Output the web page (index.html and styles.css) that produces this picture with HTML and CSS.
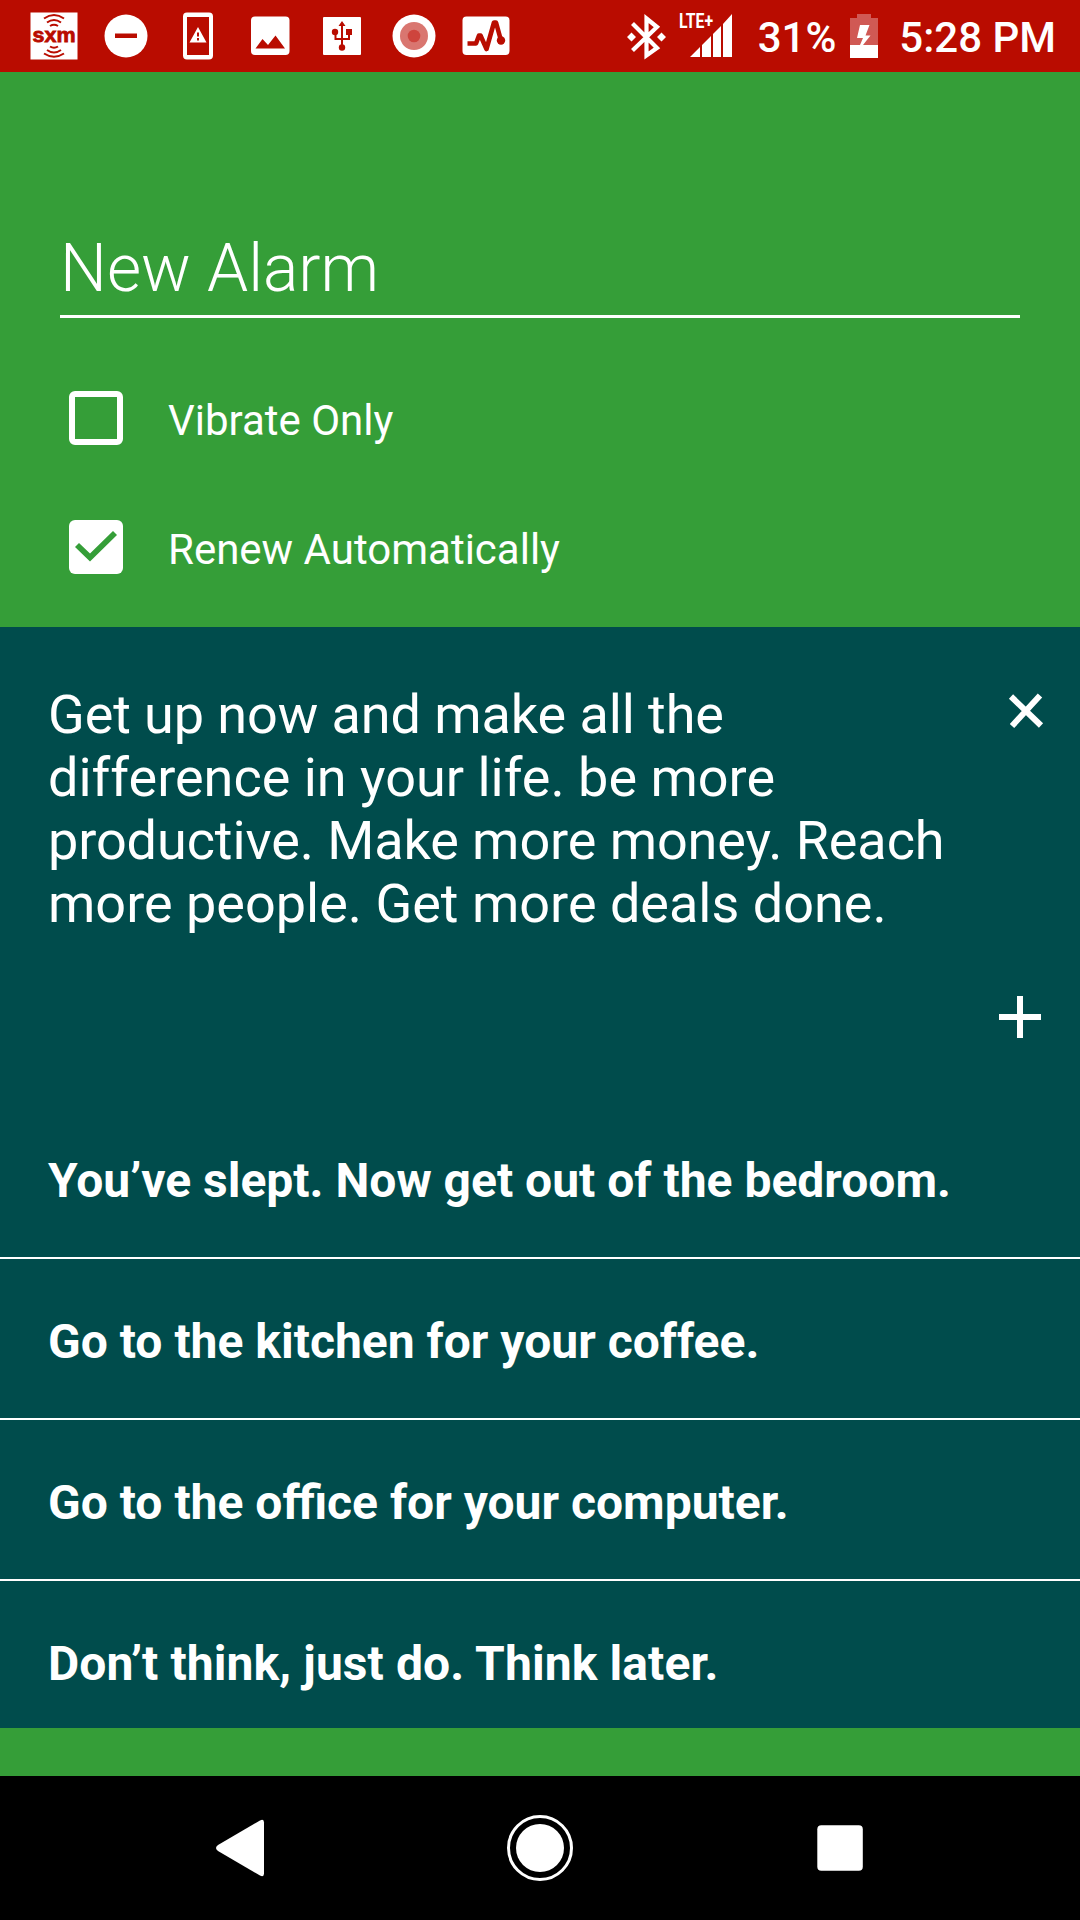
FILE: index.html
```html
<!DOCTYPE html>
<html lang="en">
<head>
<meta charset="utf-8">
<title>New Alarm</title>
<link rel="stylesheet" href="styles.css">
</head>
<body>
<div class="screen">
  <header class="status">
    <div class="notifications">
      <svg width="48" height="48" viewBox="0 0 48 48"><path class="w" d="M.5.5h47v47H.5z"/><g class="rs"><path d="M14 6.500q10-7 20 0M17 10.500q7-5 14 0M20 14q4-2.500 8 0M14 41.500q10 6.500 20 0M17 38q7 5 14 0M20 34.500q4 2.500 8 0"/></g><text class="sxm" x="2.500" y="29.500" textLength="43" lengthAdjust="spacingAndGlyphs">sxm</text></svg>
      <svg width="48" height="48" viewBox="0 0 48 48"><circle class="w" cx="24" cy="24" r="21.500"/><path class="r" d="M13 21.500h22v4.500H13z"/></svg>
      <svg width="48" height="48" viewBox="0 0 48 48"><path class="w" fill-rule="evenodd" d="M13 .5h22q4 0 4 4v39q0 4-4 4H13q-4 0-4-4v-39q0-4 4-4zM13 5v38h22V5zM24 15l8.500 15.500h-17zM23 20.500v4h2v-4zM23 26v2.500h2V26z"/></svg>
      <svg width="48" height="48" viewBox="0 0 48 48"><rect class="w" x="5" y="4.500" width="38.500" height="38.500" rx="4"/><path class="r" d="M9.500 36.500l7-9.500 5.500 6 7.500-9.500 9.500 13z"/></svg>
      <svg width="48" height="48" viewBox="0 0 48 48"><rect class="w" x="5" y="5" width="38" height="38" rx="1"/><path class="r" d="M24 9l3.500 5h-7zM28 17h6v6h-6z"/><circle class="r" cx="17" cy="20" r="3.200"/><circle class="r" cx="24" cy="35.500" r="3.200"/><path class="rs" d="M24 13v22M17.500 20v7h13.500v-6"/></svg>
      <svg width="48" height="48" viewBox="0 0 48 48"><circle class="w" cx="24" cy="24" r="21.500"/><circle fill="#d97670" cx="24" cy="24" r="14"/><circle fill="#ce443d" cx="24" cy="24" r="6.300"/></svg>
      <svg width="48" height="48" viewBox="0 0 48 48"><rect class="w" x=".5" y="4.500" width="47" height="38.500" rx="4"/><path class="trace" d="M5.500 31.500h8.500l3-8h1.500l6 13.500L32 10.500h2l5 18"/><circle class="r" cx="39" cy="28.500" r="4.200"/></svg>
    </div>
    <div class="system">
      <svg class="bt" width="39" height="44" viewBox="0 0 39 44"><path class="bts" d="M5.500 8.500L30 33 19.500 40.500V3.500L30 12 5.500 35.500"/><path class="w" d="M4.500 17.500l4.500 4.500-4.500 4.500L0 22zM34.500 17.500L39 22l-4.500 4.500L30 22z"/></svg>
      <svg class="signal" width="54" height="48" viewBox="0 0 54 48"><text class="lte" x="0" y="16" textLength="34" lengthAdjust="spacingAndGlyphs">LTE+</text><path class="w" d="M11 45l10-10V45zM23 33l9-9v21h-9zM34 22l8-8v31h-8zM44 12l9-10v43h-9z"/></svg>
      <span class="percent">31%</span>
      <svg class="battery" width="28" height="44" viewBox="0 0 28 44"><path fill="#d05954" d="M0 4h7V0h14v4h7v27H0z"/><path class="w" d="M0 31h28v13H0zM10 11h9.500l-4 10.500h5L13 31h-3l3-7H7z"/></svg>
      <span class="clock">5:28 PM</span>
    </div>
  </header>
  <main class="content">
    <section class="settings">
      <div class="name">New Alarm</div>
      <div class="option"><span class="box"></span><span class="label">Vibrate Only</span></div>
      <div class="option"><span class="box checked"><svg width="54" height="54" viewBox="0 0 54 54"><path class="tick" d="M6 27l4-4 11 10.500L44 11l4 4-27 26.500z"/></svg></span><span class="label">Renew Automatically</span></div>
    </section>
    <section class="panel">
      <div class="message">
        <p><span class="tight">Get up now and make all the</span><br>difference in your life. be more<br><span class="tight">productive. Make more money. Reach</span><br>more people. Get more deals done.</p>
        <svg class="close" width="34" height="36" viewBox="0 0 34 36"><path class="cross" d="M2 3.500l30 29M31 2.500L3 33"/></svg>
      </div>
      <div class="add"><svg width="42" height="42" viewBox="0 0 42 42"><path class="w" d="M18 0h6v18h18v6H24v18h-6V24H0v-6h18z"/></svg></div>
      <ul class="steps">
        <li>You’ve slept. Now get out of the bedroom.</li>
        <li>Go to the kitchen for your coffee.</li>
        <li>Go to the office for your computer.</li>
        <li class="loose">Don’t think, just do. Think later.</li>
      </ul>
    </section>
  </main>
  <nav class="nav">
    <svg width="66" height="66" viewBox="0 0 66 66"><path class="w" d="M3 30L45 5.500q4-2 4 2v51q0 4-4 2L3 36q-4-3 0-6z"/></svg>
    <svg class="home" width="66" height="66" viewBox="0 0 66 66"><circle class="w" cx="33" cy="33" r="24"/><circle class="ring" cx="33" cy="33" r="31.500"/></svg>
    <svg width="66" height="66" viewBox="0 0 66 66"><rect class="w" x="10.300" y="10.300" width="45.500" height="45.500" rx="4"/></svg>
  </nav>
</div>
</body>
</html>
```
FILE: styles.css
```css
* { box-sizing: border-box; margin: 0; padding: 0; }
body { background: #359e38; color: #fff; font-family: Roboto, sans-serif; }
svg { display: block; flex: none; overflow: visible; }
.screen { width: 1080px; height: 1920px; display: flex; flex-direction: column; overflow: hidden; }
.status { height: 72px; flex: none; background: #b90c00; display: flex; justify-content: space-between; align-items: flex-start; padding: 0 24px 0 30px; }
.notifications { display: flex; gap: 24px; padding-top: 12px; }
.system { display: flex; align-items: flex-start; font-size: 42px; font-weight: 500; line-height: 50px; white-space: nowrap; padding-top: 12px; }
.bt { margin: 3px 13px 0 0; }
.signal { margin-right: 25px; }
.percent { margin-right: 14px; }
.percent, .clock { padding-top: 1px; }
.battery { margin: 2px 21px 0 0; }
.w { fill: #fff; }
.r { fill: #b90c00; }
.rs { fill: none; stroke: #b90c00; stroke-width: 2; }
.trace { fill: none; stroke: #b90c00; stroke-width: 4.6; stroke-linejoin: round; }
.bts { fill: none; stroke: #fff; stroke-width: 4.2; }
.sxm { font: 700 21px "Liberation Sans", sans-serif; fill: #b90c00; stroke: #b90c00; stroke-width: .8; }
.lte { font: 700 21px Roboto, sans-serif; fill: #fff; }
.content { flex: 1; background: #359e38; }
.settings { height: 555px; padding: 142px 60px 0; }
.name { height: 104px; border-bottom: 3px solid #fff; padding-top: 16px; font-size: 66px; font-weight: 300; line-height: 77px; }
.option { height: 128px; margin-bottom: 1px; display: flex; align-items: center; gap: 45px; padding-left: 9px; font-size: 42px; line-height: 50px; }
.name + .option { margin-top: 36px; }
.label { padding-top: 6px; }
.box { width: 54px; height: 54px; border: 6px solid #fff; border-radius: 6px; }
.box.checked { border: 0; background: #fff; }
.tick { fill: #359e38; }
.panel { height: 1101px; background: #004c4c; overflow: hidden; }
.message { height: 369px; display: flex; justify-content: space-between; padding: 56px 37px 0 48px; font-size: 54px; line-height: 63px; white-space: nowrap; }
.tight { letter-spacing: -.09px; }
.close { margin-top: 10px; }
.cross { fill: none; stroke: #fff; stroke-width: 6; }
.add { height: 102px; display: flex; justify-content: flex-end; padding-right: 39px; }
.steps { list-style: none; }
.steps li { height: 161px; display: flex; align-items: center; padding: 6px 0 0 48px; border-bottom: 2px solid #fff; font-size: 48px; font-weight: 700; white-space: nowrap; }
.steps .loose { letter-spacing: .1px; }
.nav { height: 144px; flex: none; background: #000; display: flex; justify-content: space-between; align-items: center; padding: 0 207px 0 215px; }
.home { margin-right: 8px; }
.ring { fill: none; stroke: #fff; stroke-width: 3; }
```
